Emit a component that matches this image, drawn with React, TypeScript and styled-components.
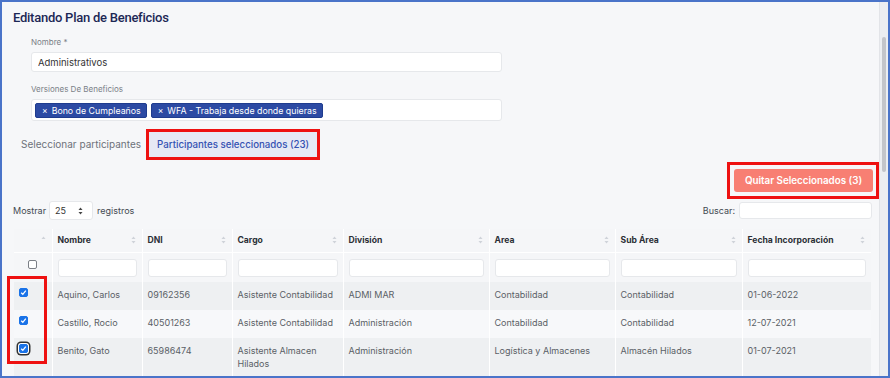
import React from 'react';
import styled, { createGlobalStyle } from 'styled-components';

const GlobalStyle = createGlobalStyle`
  html, body { margin: 0; padding: 0; }
  body { font-family: Inter, "Noto Sans", sans-serif; background: #fff; }
  * { box-sizing: border-box; }
`;

type Row = {
  name: string;
  dni: string;
  cargo: string;
  division: string;
  area: string;
  subArea: string;
  fecha: string;
  focused?: boolean;
};

const rows: Row[] = [
  { name: 'Aquino, Carlos', dni: '09162356', cargo: 'Asistente Contabilidad', division: 'ADMI MAR', area: 'Contabilidad', subArea: 'Contabilidad', fecha: '01-06-2022' },
  { name: 'Castillo, Rocio', dni: '40501263', cargo: 'Asistente Contabilidad', division: 'Administración', area: 'Contabilidad', subArea: 'Contabilidad', fecha: '12-07-2021' },
  { name: 'Benito, Gato', dni: '65986474', cargo: 'Asistente Almacen Hilados', division: 'Administración', area: 'Logística y Almacenes', subArea: 'Almacén Hilados', fecha: '01-07-2021', focused: true },
];

const columns = [
  { label: '', width: 38 },
  { label: 'Nombre', width: 90 },
  { label: 'DNI', width: 90 },
  { label: 'Cargo', width: 111 },
  { label: 'División', width: 146 },
  { label: 'Area', width: 126 },
  { label: 'Sub Área', width: 127 },
  { label: 'Fecha Incorporación', width: 129 },
];

function SortIcon({ only }: { only?: boolean }) {
  return (
    <svg width="5" height="8" viewBox="0 0 5 8">
      <path d="M2.5 0.5 L4.5 3 L0.5 3 Z" fill="#cfd3d9" />
      {!only && <path d="M2.5 7.5 L4.5 5 L0.5 5 Z" fill="#cfd3d9" />}
    </svg>
  );
}

function Check({ checked, focused }: { checked?: boolean; focused?: boolean }) {
  return (
    <CheckBox $checked={checked} $focused={focused}>
      {checked && (
        <svg width="7" height="7" viewBox="0 0 7 7">
          <path d="M1.2 3.8 L2.8 5.3 L5.8 1.6" stroke="#fff" strokeWidth="1.3" fill="none" />
        </svg>
      )}
    </CheckBox>
  );
}

export default function App() {
  return (
    <>
      <GlobalStyle />
      <Frame>
        <Main>
          <Title>Editando Plan de Beneficios</Title>
          <Form>
            <Label>Nombre *</Label>
            <TextInput readOnly value="Administrativos" />
            <Label $gap={11}>Versiones De Beneficios</Label>
            <MultiBox>
              <Tag><span>×</span>Bono de Cumpleaños</Tag>
              <Tag><span>×</span>WFA - Trabaja desde donde quieras</Tag>
            </MultiBox>
          </Form>

          <Tabs>
            <Tab>Seleccionar participantes</Tab>
            <Tab $active>Participantes seleccionados (23)</Tab>
          </Tabs>

          <Actions>
            <MarkBox>
              <RemoveButton>Quitar Seleccionados (3)</RemoveButton>
            </MarkBox>
          </Actions>

          <Controls>
            <Inline>
              Mostrar
              <LengthSelect>
                25
                <svg width="5" height="8" viewBox="0 0 5 8">
                  <path d="M2.5 0.5 L4.5 3 L0.5 3 Z" fill="#444" />
                  <path d="M2.5 7.5 L4.5 5 L0.5 5 Z" fill="#444" />
                </svg>
              </LengthSelect>
              registros
            </Inline>
            <Inline>
              Buscar:
              <SearchInput />
            </Inline>
          </Controls>

          <Table>
            <colgroup>
              {columns.map((c, i) => (
                <col key={i} style={{ width: c.width }} />
              ))}
            </colgroup>
            <thead>
              <tr>
                {columns.map((c, i) => (
                  <Th key={i}>
                    <HeadInner>
                      <span>{c.label}</span>
                      <SortIcon only={i === 0} />
                    </HeadInner>
                  </Th>
                ))}
              </tr>
              <FilterRow>
                <td>
                  <Check />
                </td>
                {columns.slice(1).map((c, i) => (
                  <td key={i}>
                    <FilterInput />
                  </td>
                ))}
              </FilterRow>
            </thead>
            <tbody>
              {rows.map((r, i) => (
                <DataRow key={i} $odd={i % 2 === 0}>
                  <CheckCell>
                    {i === 0 && <Highlight />}
                    <Check checked focused={r.focused} />
                  </CheckCell>
                  <Td>{r.name}</Td>
                  <Td>{r.dni}</Td>
                  <Td>{r.cargo}</Td>
                  <Td>{r.division}</Td>
                  <Td>{r.area}</Td>
                  <Td>{r.subArea}</Td>
                  <Td>{r.fecha}</Td>
                </DataRow>
              ))}
            </tbody>
          </Table>
        </Main>
        <ScrollTrack>
          <ScrollThumb />
        </ScrollTrack>
      </Frame>
    </>
  );
}

const Frame = styled.div`
  width: 890px;
  height: 378px;
  border: 2px solid #4a74c9;
  background: #f6f7f9;
  display: flex;
  overflow: hidden;
`;

const Main = styled.div`
  flex: 1;
  min-width: 0;
  padding: 6px 7px 0 12px;
  display: flex;
  flex-direction: column;
`;

const Title = styled.h1`
  margin: 0 0 0 -1px;
  font-family: Roboto, Inter, sans-serif;
  font-size: 13px;
  line-height: 20px;
  font-weight: 500;
  color: #1c2755;
  letter-spacing: -0.25px;
`;

const Form = styled.div`
  margin-left: 17px;
  width: 471px;
  display: flex;
  flex-direction: column;
`;

const Label = styled.div<{ $gap?: number }>`
  margin-top: ${(p) => p.$gap ?? 8}px;
  font-size: 8px;
  line-height: 12px;
  color: #7a7f87;
  margin-bottom: 4px;
`;

const TextInput = styled.input`
  height: 20px;
  width: 100%;
  border: 1px solid #e6e8eb;
  border-radius: 3px;
  background: #fff;
  padding: 0 6px;
  font-family: inherit;
  font-size: 9.5px;
  color: #333;
  outline: none;
`;

const MultiBox = styled.div`
  height: 22px;
  border: 1px solid #e6e8eb;
  border-radius: 3px;
  background: #fff;
  display: flex;
  align-items: center;
  gap: 4px;
  padding: 0 3px;
`;

const Tag = styled.div`
  height: 15px;
  display: flex;
  align-items: center;
  gap: 4px;
  padding: 0 5px 0 6px;
  background: #2c4aa3;
  border: 1px solid #1f3c8e;
  border-radius: 2px;
  color: #fff;
  font-size: 8.8px;
  span {
    font-size: 8.5px;
  }
`;

const Tabs = styled.div`
  margin: 11px 0 0 -1px;
  display: flex;
`;

const Tab = styled.div<{ $active?: boolean }>`
  height: 25px;
  line-height: 25px;
  padding: 0 8px;
  font-size: ${(p) => (p.$active ? 9.7 : 10)}px;
  color: ${(p) => (p.$active ? '#3451b2' : '#6d727a')};
  background: ${(p) => (p.$active ? '#e6e9f4' : 'transparent')};
  outline: ${(p) => (p.$active ? '3px solid #ee1111' : 'none')};
  font-weight: ${(p) => (p.$active ? 500 : 400)};
`;

const Actions = styled.div`
  margin: 5px -7px 0 0;
  display: flex;
  justify-content: flex-end;
`;

const MarkBox = styled.div`
  border: 3px solid #ee1111;
  padding: 4px 3px 4px 4px;
`;

const RemoveButton = styled.button`
  display: block;
  width: 139px;
  height: 23px;
  padding: 0;
  border: none;
  border-radius: 3px;
  background: #f87f73;
  color: #fff;
  font-family: inherit;
  font-size: 9.8px;
  font-weight: 600;
`;

const Controls = styled.div`
  margin-top: 2px;
  height: 19px;
  display: flex;
  justify-content: space-between;
  align-items: center;
`;

const Inline = styled.div`
  display: flex;
  align-items: center;
  gap: 4px;
  font-size: 9px;
  color: #444a52;
  margin-left: -1px;
`;

const LengthSelect = styled.div`
  width: 44px;
  height: 19px;
  margin-left: -1px;
  background: #fff;
  border: 1px solid #e6e8eb;
  border-radius: 3px;
  display: flex;
  align-items: center;
  justify-content: space-between;
  padding: 0 9px 0 5px;
  color: #333;
`;

const SearchInput = styled.input`
  width: 133px;
  height: 17px;
  border: 1px solid #e6e8eb;
  border-radius: 3px;
  background: #fff;
  outline: none;
`;

const Table = styled.table`
  margin-top: 9px;
  width: 857px;
  table-layout: fixed;
  border-collapse: collapse;
  font-size: 9px;
`;

const Th = styled.th`
  height: 23px;
  padding: 0 6px 0 5px;
  text-align: left;
  font-size: 8.6px;
  font-weight: 700;
  color: #2b2f36;
  background: #f5f6f8;
  border-left: 1px solid #fff;
  border-bottom: 1px solid #fff;
  &:first-child {
    border-left: none;
  }
`;

const HeadInner = styled.div`
  display: flex;
  align-items: center;
  justify-content: space-between;
`;

const FilterRow = styled.tr`
  td {
    height: 30px;
    padding: 6px 5px 5px;
    background: #f5f6f8;
    border-left: 1px solid #fff;
    vertical-align: top;
  }
  td:first-child {
    border-left: none;
    padding-top: 7px;
  }
`;

const FilterInput = styled.input`
  display: block;
  width: 100%;
  height: 18px;
  border: 1px solid #e6e8eb;
  border-radius: 3px;
  background: #fff;
  outline: none;
`;

const DataRow = styled.tr<{ $odd: boolean }>`
  td {
    background: ${(p) => (p.$odd ? '#eef0f2' : '#f7f8fa')};
  }
`;

const Td = styled.td`
  padding: 6px 5px 9px;
  line-height: 13px;
  color: #5a5f66;
  vertical-align: top;
  border-left: 1px solid #fff;
`;

const CheckCell = styled.td`
  position: relative;
  padding: 6px 5px 9px;
  vertical-align: top;
`;

const CheckBox = styled.span<{ $checked?: boolean; $focused?: boolean }>`
  display: flex;
  align-items: center;
  justify-content: center;
  width: 9px;
  height: 9px;
  margin: ${(p) => (p.$checked ? '0' : '0 auto')};
  border-radius: 2px;
  background: ${(p) => (p.$checked ? '#1a73e8' : '#fff')};
  border: 1px solid ${(p) => (p.$checked ? '#1a73e8' : '#7b7f86')};
  box-shadow: ${(p) => (p.$focused ? '0 0 0 1px #fff, 0 0 0 2.5px #333' : 'none')};
`;

const Highlight = styled.div`
  position: absolute;
  z-index: 2;
  left: -7px;
  top: -6px;
  width: 40px;
  height: 88px;
  border: 3px solid #ee1111;
  pointer-events: none;
`;

const ScrollTrack = styled.div`
  width: 9px;
  background: #eceef1;
  border-left: 1px solid #e2e4e8;
  display: flex;
  justify-content: center;
  padding-top: 35px;
`;

const ScrollThumb = styled.div`
  width: 4px;
  height: 135px;
  background: #c3c5ca;
  border-radius: 2px;
`;
